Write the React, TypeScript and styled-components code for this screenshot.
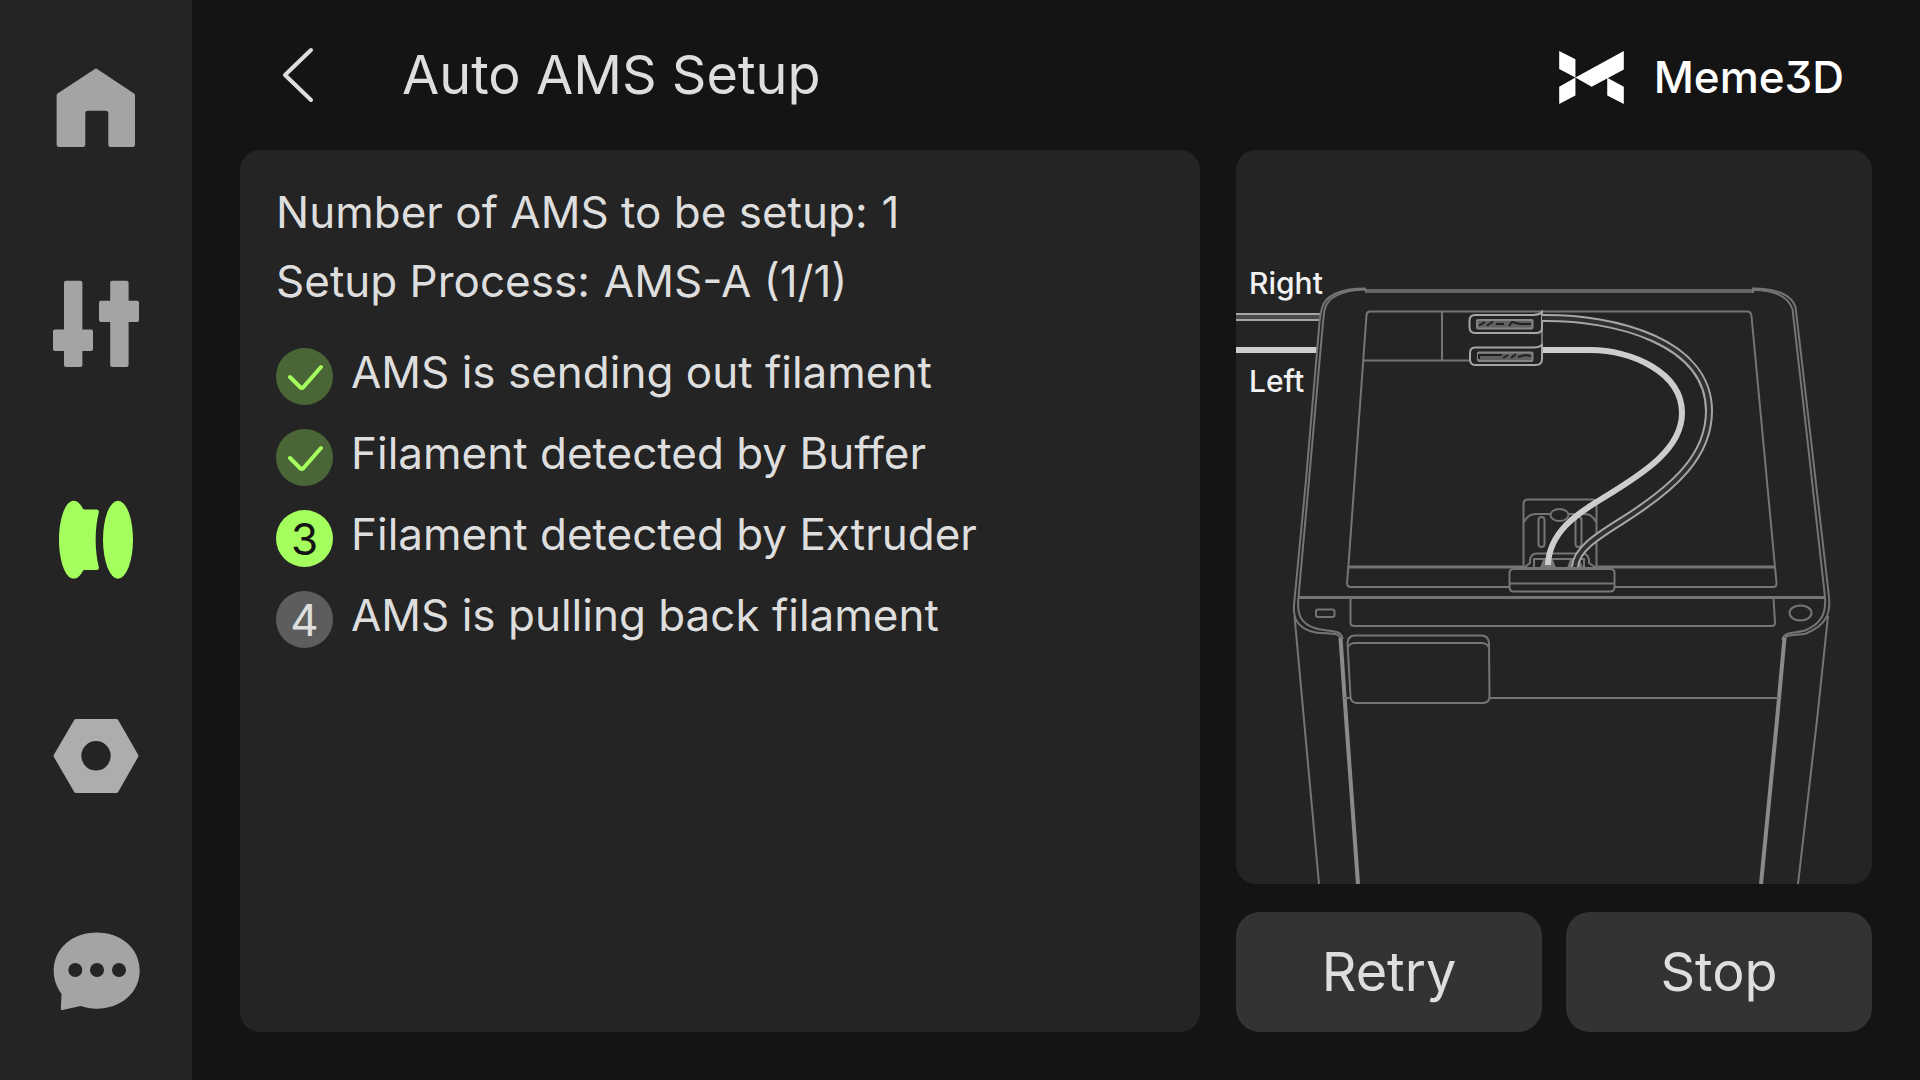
import React from 'react';
import styled, { createGlobalStyle } from 'styled-components';

const color = {
  page: '#141414',
  surface: '#242424',
  button: '#333333',
  text: '#dedede',
  icon: '#a4a4a4',
  accent: '#a4fe5e',
  accentDim: '#4a6636',
  idle: '#5d5d5d',
  line: '#757575',
  lineBright: '#a6a6a6',
  tube: '#cdcdcd',
};

const GlobalStyle = createGlobalStyle`
  *, *::before, *::after { box-sizing: border-box; }
  body {
    margin: 0;
    background: ${color.page};
    color: ${color.text};
    font-family: Inter, "Noto Sans", sans-serif;
  }
  button {
    margin: 0;
    padding: 0;
    border: 0;
    background: none;
    color: inherit;
    font: inherit;
    cursor: pointer;
  }
`;

const Screen = styled.div`
  display: flex;
  min-height: 100vh;
`;

const Sidebar = styled.nav`
  display: flex;
  flex-direction: column;
  flex: 0 0 192px;
  background: ${color.surface};
`;

const NavButton = styled.button<{ $active?: boolean }>`
  display: flex;
  flex: 1;
  align-items: center;
  justify-content: center;
  color: ${(p) => (p.$active ? color.accent : color.icon)};
`;

const NavIcon = styled.svg`
  width: 96px;
  height: 96px;
  fill: currentColor;
`;

const Main = styled.main`
  display: flex;
  flex: 1;
  flex-direction: column;
  min-width: 0;
  padding: 0 48px 48px;
`;

const Header = styled.header`
  display: flex;
  align-items: center;
  height: 150px;
  padding: 0 28px 0 20px;
`;

const BackButton = styled.button`
  display: flex;
  align-items: center;
  justify-content: center;
  width: 76px;
  height: 76px;
`;

const BackIcon = styled.svg`
  width: 32px;
  height: 56px;
  fill: none;
  stroke: currentColor;
  stroke-width: 4;
  stroke-linecap: round;
  stroke-linejoin: round;
`;

const Title = styled.h1`
  flex: 1;
  margin: 0 0 0 66px;
  font-size: 54px;
  font-weight: 400;
  line-height: 64px;
`;

const Brand = styled.div`
  display: flex;
  align-items: center;
  gap: 30px;
  padding-top: 4px;
  color: #ffffff;
  font-size: 44px;
  font-weight: 500;
  font-feature-settings: "cv09";
  line-height: 56px;
`;

const BrandMark = styled.svg`
  width: 65px;
  height: 53px;
  fill: currentColor;
`;

const Content = styled.div`
  display: grid;
  flex: 1;
  grid-template-columns: minmax(0, 960fr) minmax(0, 636fr);
  gap: 36px;
`;

const Panel = styled.section`
  border-radius: 20px;
  background: ${color.surface};
`;

const StatusPanel = styled(Panel)`
  padding: 28px 36px;
`;

const Facts = styled.dl`
  margin: 0;
  font-size: 44px;
  line-height: 69px;
`;

const Fact = styled.div`
  display: flex;
  gap: 14px;

  dd {
    margin: 0;
  }
`;

const Steps = styled.ol`
  display: flex;
  flex-direction: column;
  gap: 24px;
  margin: 32px 0 0;
  padding: 0;
  list-style: none;
`;

const Step = styled.li`
  display: flex;
  align-items: flex-start;
  gap: 18px;
  font-size: 44px;
  line-height: 48px;
`;

type StepState = 'done' | 'current' | 'pending';

const badgeColors: Record<StepState, [string, string]> = {
  done: [color.accentDim, color.accent],
  current: [color.accent, color.page],
  pending: [color.idle, color.text],
};

const Badge = styled.span<{ $state: StepState }>`
  display: flex;
  flex: none;
  align-items: center;
  justify-content: center;
  width: 57px;
  height: 57px;
  border-radius: 50%;
  background: ${(p) => badgeColors[p.$state][0]};
  color: ${(p) => badgeColors[p.$state][1]};
`;

const CheckIcon = styled.svg`
  width: 38px;
  height: 28px;
  fill: none;
  stroke: currentColor;
  stroke-width: 4;
  stroke-linecap: round;
  stroke-linejoin: round;
`;

const Side = styled.div`
  display: flex;
  flex-direction: column;
  gap: 28px;
`;

const DiagramPanel = styled(Panel)`
  display: flex;
  flex: 1;
  overflow: hidden;
`;

const Diagram = styled.svg`
  width: 100%;
  height: auto;
  fill: none;
  stroke: ${color.line};
  stroke-width: 2;
`;

const Masked = styled.g`
  fill: ${color.surface};
`;

const Bright = styled.g`
  stroke: ${color.lineBright};
`;

const DiagramLabel = styled.text`
  fill: #f2f2f2;
  stroke: none;
  font-size: 30px;
  font-weight: 500;
`;

const Actions = styled.div`
  display: grid;
  grid-template-columns: 1fr 1fr;
  gap: 24px;
`;

const ActionButton = styled.button`
  height: 120px;
  border-radius: 24px;
  background: ${color.button};
  font-size: 54px;
  line-height: 64px;
`;

function HomeIcon() {
  return (
    <NavIcon viewBox="0 0 96 96" aria-hidden="true">
      <path d="M46.5 9.2Q48 8 49.5 9.2L86 33.6Q87 34.3 87 35.5V84.5Q87 87 84.5 87H62.5Q60.3 87 60.3 84.5V53.5Q60.3 50.7 57.5 50.7H40Q37.3 50.7 37.3 53.5V84.5Q37.3 87 35 87H11Q8.6 87 8.6 84.5V35.5Q8.6 34.3 9.6 33.6Z" />
    </NavIcon>
  );
}

function ControlIcon() {
  return (
    <NavIcon viewBox="0 0 96 96" aria-hidden="true">
      <rect x="16" y="4.7" width="18.4" height="86.3" rx="2" />
      <rect x="5" y="53.4" width="40" height="21.6" rx="2" />
      <rect x="62.2" y="4.7" width="18.4" height="86.3" rx="2" />
      <rect x="51" y="24.7" width="40" height="21.4" rx="2" />
    </NavIcon>
  );
}

function FilamentIcon() {
  return (
    <NavIcon viewBox="0 0 96 96" aria-hidden="true">
      <path d="M25.5 8.7C29.5 8.7 32.5 12 34.5 16Q35.3 17.6 37 17.6H48.5Q51.5 17.6 50.8 20.5C46.6 37 46.6 58.5 50.8 75Q51.5 78 48.5 78H37Q35.3 78 34.5 79.4C32.5 83.4 29.5 86.6 25.5 86.6C17.5 86.6 11 69 11 47.7C11 26.4 17.5 8.7 25.5 8.7Z" />
      <ellipse cx="70" cy="47.7" rx="15" ry="39" />
    </NavIcon>
  );
}

function SettingsIcon() {
  return (
    <NavIcon viewBox="0 0 96 96" fillOpacity="1" aria-hidden="true">
      <path
        fill="#adadad"
        fillRule="evenodd"
        d="M28 11H68.4Q69.5 11 70.2 12L90 46.4Q90.8 47.8 90 49.2L70.2 84Q69.5 85 68.4 85H28Q26.9 85 26.2 84L6 49.2Q5.2 47.8 6 46.4L26.2 12Q26.9 11 28 11ZM48 33.1A14.7 14.7 0 1 0 48 62.5A14.7 14.7 0 1 0 48 33.1Z"
      />
    </NavIcon>
  );
}

function AssistantIcon() {
  return (
    <NavIcon viewBox="0 0 96 96" aria-hidden="true">
      <path
        fillRule="evenodd"
        d="M48.7 8.5C72.5 8.5 91.7 24 91.7 46.6C91.7 69 72.5 84.8 48.7 84.8C43 84.8 37.5 83.6 32.5 82L14.5 86Q12.7 86.3 12.8 84.5L13.5 70C8.5 63 5.7 55.5 5.7 46.6C5.7 24 25 8.5 48.7 8.5ZM27.3 39A7 7 0 1 0 27.3 53A7 7 0 1 0 27.3 39ZM49 39A7 7 0 1 0 49 53A7 7 0 1 0 49 39ZM71 39A7 7 0 1 0 71 53A7 7 0 1 0 71 39Z"
      />
    </NavIcon>
  );
}

const rightTube = 'M306 168C380 167 473 192 473 261C473 305 440 337 384 372C360 387 340 400 339 417';

function PrinterDiagram() {
  return (
    <Diagram viewBox="0 0 636 734" role="img" aria-label="Filament path from the AMS to the extruder">
      <DiagramLabel x="13" y="144">Right</DiagramLabel>
      <DiagramLabel x="13" y="242">Left</DiagramLabel>

      {/* feed tubes entering from the AMS */}
      <path d="M0 167H84" stroke={color.lineBright} strokeWidth="8" />
      <path d="M0 167H84" stroke="#4a4a4a" strokeWidth="4" />
      <path d="M0 200H81" stroke={color.tube} strokeWidth="6" />

      {/* top frame */}
      <path d="M129 141H517" stroke="#666666" strokeWidth="4" />
      <path d="M129 141V138.5C104 138.5 89 146 86 158Q84 165 83.5 172L70 330L58 455C57 468 61 479 80 482.5C92 484.5 104 481 104.5 490" />
      <path d="M129 139.5C106 140 91 147 88.500 160L87 172L73 330L62.5 447C61 462 63 474 80 478.5C92 482 106 479 106.5 489" />
      <path d="M517 143V138.5C540 138.5 556 145 559.5 157L575 290L593 447C594.5 463 591 475 570 483.5C561 486 549 483 548.5 490" />
      <path d="M517 140C539 140 552 147 556.5 159L572 295L589 447C590 462 587 473 569 480.5C559 483.5 547 481 546.5 490" />

      {/* legs */}
      <path d="M104.5 488L109.5 560L122 734M548.5 488L541 570L525 734" stroke="#8a8a8a" strokeWidth="4" />
      <path d="M58.5 466L68 570L83 734M592 466L581 570L562 734" />

      {/* glass opening and front beam */}
      <path d="M134 161.5H511Q515 161.5 515.5 166L540.5 433Q541 437 537 437H115Q111 437 111 433L113 408L130.5 165Q131 161.5 134 161.5Z" />
      <path d="M112 417H539" strokeWidth="3" />
      <path d="M62 447.5H589" strokeWidth="3" />
      <path d="M114.5 448V473Q115 476 118 476H535Q539 476 539 473L537.5 448" />
      <rect x="80" y="459.5" width="18.5" height="7.5" rx="2" />
      <ellipse cx="564.5" cy="463" rx="11" ry="7.5" />

      {/* front display */}
      <path d="M111.5 493Q112 485.5 119 485.5H245Q252.5 485.5 253 493L253.5 546Q253.5 553 247 553H121Q115 553 114.5 547Z" />
      <path d="M112 497Q114 493 119 493H245Q251 493 252.5 497" />
      <path d="M108 548H115M254 548H543" />

      {/* rear compartment */}
      <path d="M128 210.5H234M206 161.5V210.5" />
      <path d="M306 160V204" />

      {/* filament couplers */}
      <Masked>
        <Bright>
          <path d="M239 165H298Q303 165 306 162V178Q306 183 300 183H239Q233.5 183 233.5 177V171Q233.5 165 239 165Z" />
          <path d="M239 197.5H298Q303 197.5 306 195V209Q306 215 300 215H239Q234 215 234 209V203Q234 197.5 239 197.5Z" />
        </Bright>
      </Masked>
      <rect x="241" y="170" width="55.5" height="8.5" rx="1" fill="#606060" stroke="#858585" />
      <path d="M243 175.5L249 172M251 175.5L257 171.5M260 174H268M273 176L276 172L284 174H295" stroke="#202020" />
      <rect x="242" y="202.5" width="54.5" height="8.5" rx="1" fill="#606060" stroke="#858585" />
      <path d="M243 209V205H266M267 208L272 205M275 208L280 204M282 207L289 205L295 206" stroke="#202020" />

      {/* tool head back plate */}
      <Masked>
        <path d="M287.5 417V354Q287.5 349.5 292 349.5H356Q360.5 349.5 360.5 354V417Z" />
        <path d="M288 372Q292 364 300 364H349Q356 364 360 372" />
        <ellipse cx="323.5" cy="365" rx="9" ry="6" />
        <rect x="302.5" y="367" width="6" height="30" rx="3" />
        <rect x="339.5" y="367" width="6" height="30" rx="3" />
        <path d="M289 417L294 413V410Q295 403.5 301 403.5H346Q352 403.5 353 410V413L359 417" />
        <path d="M298 417V409H348V417" />
      </Masked>
      <path d="M305 418L308 410H316L319 418ZM332 418L335 410H343L346 418Z" fill="#777777" />

      {/* tubes to the extruder */}
      <path d={rightTube} stroke={color.lineBright} strokeWidth="8" />
      <path d={rightTube} stroke="#303030" strokeWidth="4" />
      <path d="M307 200H354C395 200 446 222 446 263C446 298 410 322 367 348C340 364 313 383 312 415" stroke={color.tube} strokeWidth="6" />

      {/* tool head base */}
      <Masked>
        <path d="M278 419H374Q378.5 419 378.5 423V437Q378.5 441.5 374 441.5H278Q273.5 441.5 273.5 437V423Q273.5 419 278 419Z" />
        <path d="M274 433.5H378" />
      </Masked>
    </Diagram>
  );
}

const navItems = [
  { label: 'Home', Icon: HomeIcon },
  { label: 'Controls', Icon: ControlIcon },
  { label: 'Filament', Icon: FilamentIcon, active: true },
  { label: 'Settings', Icon: SettingsIcon },
  { label: 'Assistant', Icon: AssistantIcon },
];

const facts = [
  { term: 'Number of AMS to be setup:', value: '1' },
  { term: 'Setup Process:', value: 'AMS-A (1/1)' },
];

const steps: { label: string; state: StepState }[] = [
  { label: 'AMS is sending out filament', state: 'done' },
  { label: 'Filament detected by Buffer', state: 'done' },
  { label: 'Filament detected by Extruder', state: 'current' },
  { label: 'AMS is pulling back filament', state: 'pending' },
];

export default function App() {
  return (
    <Screen>
      <GlobalStyle />
      <Sidebar aria-label="Main">
        {navItems.map(({ label, Icon, active }) => (
          <NavButton key={label} type="button" aria-label={label} $active={active}>
            <Icon />
          </NavButton>
        ))}
      </Sidebar>
      <Main>
        <Header>
          <BackButton type="button" aria-label="Back">
            <BackIcon viewBox="0 0 32 56" aria-hidden="true">
              <path d="M29 3L3 28L29 53" />
            </BackIcon>
          </BackButton>
          <Title>Auto AMS Setup</Title>
          <Brand>
            <BrandMark viewBox="0 0 195 160" aria-hidden="true">
              <path d="M0 0L49 25V80L0 54ZM0 108L49 80V134L0 160ZM49 80L195 0V56L98 108ZM145 81L195 108V160L145 134Z" />
            </BrandMark>
            Meme3D
          </Brand>
        </Header>
        <Content>
          <StatusPanel>
            <Facts>
              {facts.map(({ term, value }) => (
                <Fact key={term}>
                  <dt>{term}</dt>
                  <dd>{value}</dd>
                </Fact>
              ))}
            </Facts>
            <Steps>
              {steps.map(({ label, state }, index) => (
                <Step key={label}>
                  <Badge $state={state}>
                    {state === 'done' ? (
                      <CheckIcon viewBox="0 0 38 28" aria-label="Done">
                        <path d="M4 14L14.5 24.5Q16 25.5 17.5 24L35 4" />
                      </CheckIcon>
                    ) : (
                      index + 1
                    )}
                  </Badge>
                  {label}
                </Step>
              ))}
            </Steps>
          </StatusPanel>
          <Side>
            <DiagramPanel>
              <PrinterDiagram />
            </DiagramPanel>
            <Actions>
              <ActionButton type="button">Retry</ActionButton>
              <ActionButton type="button">Stop</ActionButton>
            </Actions>
          </Side>
        </Content>
      </Main>
    </Screen>
  );
}
